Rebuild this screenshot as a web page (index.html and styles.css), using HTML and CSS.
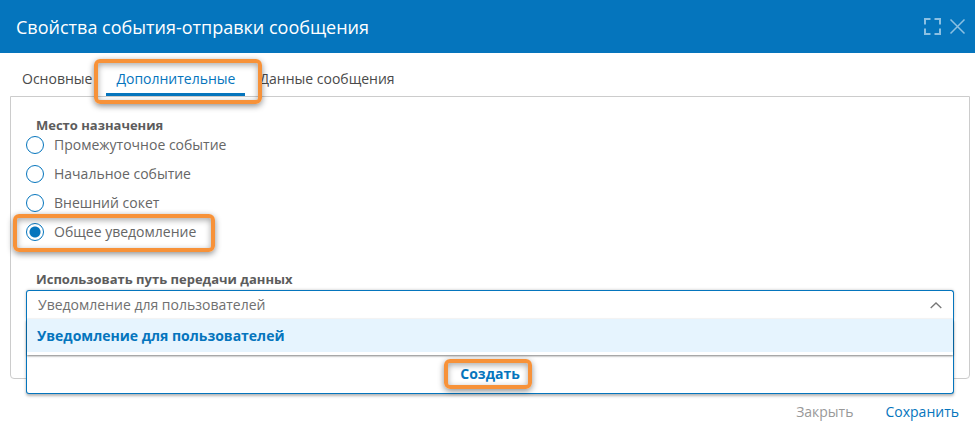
FILE: index.html
```html
<!DOCTYPE html>
<html lang="ru">
<head>
  <meta charset="utf-8">
  <meta name="viewport" content="width=device-width, initial-scale=1">
  <title>Свойства события-отправки сообщения</title>
  <link rel="stylesheet" href="styles.css">
</head>
<body>
  <div class="dialog" role="dialog" aria-labelledby="dialog-title">
    <header class="dialog-header">
      <h1 class="dialog-title" id="dialog-title">Свойства события-отправки сообщения</h1>
      <div class="window-tools">
        <button class="tool" type="button" aria-label="Развернуть">
          <svg width="17" height="17" viewBox="0 0 17 17" aria-hidden="true"><path d="M6.500 1H1V6.500M10.500 1H16V6.500M6.500 16H1V10.500M10.500 16H16V10.500"/></svg>
        </button>
        <button class="tool" type="button" aria-label="Закрыть окно">
          <svg width="17" height="17" viewBox="0 0 17 17" aria-hidden="true"><path d="M1.500 1.500L15.500 15.500M15.500 1.500L1.500 15.500"/></svg>
        </button>
      </div>
    </header>

    <div class="tabs" role="tablist">
      <button class="tab" type="button" role="tab" aria-selected="false">Основные</button>
      <button class="tab tab-active" type="button" role="tab" aria-selected="true">Дополнительные<span class="mark mark-tab"></span></button>
      <button class="tab" type="button" role="tab" aria-selected="false">Данные сообщения</button>
    </div>

    <main class="panel">
      <fieldset class="destination">
        <legend class="caption">Место назначения</legend>
        <label class="option"><input class="radio" type="radio" name="destination">Промежуточное событие</label>
        <label class="option"><input class="radio" type="radio" name="destination">Начальное событие</label>
        <label class="option"><input class="radio" type="radio" name="destination">Внешний сокет</label>
        <label class="option"><input class="radio" type="radio" name="destination" checked>Общее уведомление<span class="mark mark-option"></span></label>
      </fieldset>

      <label class="caption" for="route">Использовать путь передачи данных</label>
      <div class="combo">
        <div class="combo-box">
          <input class="combo-input" id="route" type="text" role="combobox" aria-expanded="true" aria-controls="route-list" value="Уведомление для пользователей" readonly>
          <svg class="chevron" width="12" height="7" viewBox="0 0 12 7" aria-hidden="true"><path d="M0.700 6L6 1L11.300 6"/></svg>
        </div>
        <div class="menu">
          <ul class="menu-list" id="route-list" role="listbox">
            <li class="menu-item" role="option" aria-selected="true">Уведомление для пользователей</li>
          </ul>
          <div class="menu-footer">
            <button class="create" type="button">Создать<span class="mark mark-create"></span></button>
          </div>
        </div>
      </div>
    </main>

    <footer class="dialog-footer">
      <button class="action action-muted" type="button">Закрыть</button>
      <button class="action" type="button">Сохранить</button>
    </footer>
  </div>
</body>
</html>
```

FILE: styles.css
```css
* {
  box-sizing: border-box;
}

body {
  margin: 0;
  background: #fff;
  color: #666;
  font: 14px/20px "Open Sans", sans-serif;
}

button,
input {
  font: inherit;
}

button {
  margin: 0;
  padding: 0;
  border: 0;
  background: none;
  color: #0575bd;
  cursor: pointer;
}

.dialog-header {
  display: flex;
  align-items: center;
  justify-content: space-between;
  height: 53px;
  padding: 0 9px 0 16px;
  background: #0575bd;
}

.dialog-title {
  margin: 0;
  color: #fff;
  font-size: 18px;
  font-weight: 500;
  line-height: 24px;
}

.window-tools {
  display: flex;
  gap: 8px;
}

.tool {
  display: flex;
}

.tool path {
  fill: none;
  stroke: #8cc0e2;
  stroke-width: 2;
}

.tool:last-child path {
  stroke-width: 1.5;
}

.tabs {
  display: flex;
  gap: 4px;
  height: 43px;
  padding: 0 12px;
}

.tab {
  position: relative;
  padding: 11px 10px 0;
  border-bottom: 3px solid transparent;
  color: #4a4a4a;
}

.tab-active {
  z-index: 1;
  border-bottom-color: #0575bd;
  color: #0575bd;
}

.panel {
  margin: 0 5px 0 10px;
  padding: 18px 15px 59px;
  border: 1px solid #ccc;
  border-radius: 0 0 4px 4px;
}

.destination {
  margin: 0 0 27px;
  padding: 0;
  border: 0;
}

.caption {
  display: block;
  padding: 0 10px;
  color: #5c5c5c;
  font-size: 13px;
  font-weight: 700;
  line-height: 20px;
}

.option {
  position: relative;
  display: flex;
  align-items: center;
  gap: 10px;
  width: max-content;
  height: 20px;
}

.option + .option {
  margin-top: 9px;
}

.radio {
  appearance: none;
  width: 18px;
  height: 18px;
  margin: 0;
  border: 1px solid #0575bd;
  border-radius: 50%;
}

.radio:checked {
  background: radial-gradient(circle, #0575bd 5px, #fff 6px);
}

.combo {
  position: relative;
  margin-top: 1px;
}

.combo-box {
  display: flex;
  align-items: center;
  height: 29px;
  padding: 0 11px;
  border: 1px solid #0575bd;
  border-bottom: 0;
  border-radius: 3px 3px 0 0;
  box-shadow: 0 0 3px rgba(0, 0, 0, 0.25);
}

.combo-input {
  flex: 1;
  min-width: 0;
  padding: 0;
  border: 0;
  outline: 0;
  background: none;
  color: #707070;
}

.chevron path {
  fill: none;
  stroke: #777;
  stroke-width: 1.3;
}

.menu {
  position: absolute;
  top: 100%;
  left: 0;
  right: 0;
  border: 1px solid #0575bd;
  border-top: 0;
  border-radius: 0 0 3px 3px;
  background: #fff;
  box-shadow: 0 2px 3px rgba(0, 0, 0, 0.3);
}

.menu-list {
  margin: 0;
  padding: 0 0 3px;
  list-style: none;
  box-shadow: 0 1px 2px rgba(0, 0, 0, 0.5);
}

.menu-item {
  padding: 7px 10px 6px;
  background: #e6f4fe;
  color: #0575bd;
  font-weight: 700;
}

.menu-footer {
  display: flex;
  justify-content: center;
  padding: 9px 0;
}

.create {
  position: relative;
  font-weight: 700;
}

.mark {
  position: absolute;
  border: 4px solid #f79239;
  border-radius: 6px;
  box-shadow: 0 2px 6px rgba(0, 0, 0, 0.45), inset 0 2px 6px rgba(0, 0, 0, 0.35);
  pointer-events: none;
}

.mark-tab {
  inset: 6px -17px -11px -12px;
}

.mark-option {
  inset: -8px -19px -10px -13px;
}

.mark-create {
  inset: -5px -12px -5px -16px;
}

.dialog-footer {
  display: flex;
  justify-content: flex-end;
  gap: 32px;
  padding: 23px 16px 10px;
}

.action-muted {
  color: #999;
}
```
